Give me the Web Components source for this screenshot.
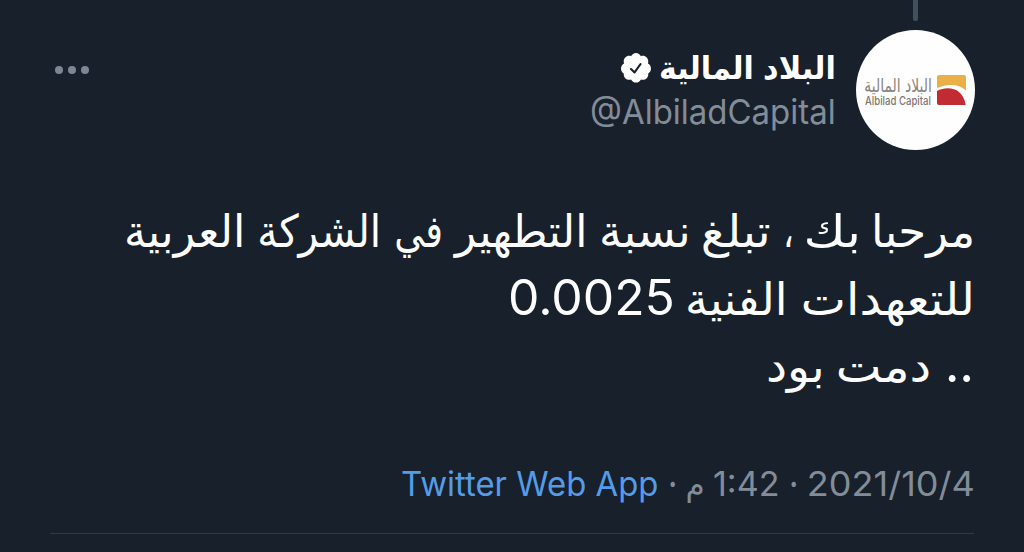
<!DOCTYPE html>
<html lang="ar">
<head>
<meta charset="utf-8">
<title>البلاد المالية</title>
<style>
html,body{margin:0;height:100%;background:#18202b;overflow:hidden}
</style>
</head>
<body>
<tweet-detail></tweet-detail>
<script>
const define = (name, html, setup) => {
  const t = document.createElement('template');
  t.innerHTML = html;
  customElements.define(name, class extends HTMLElement {
    connectedCallback() {
      if (this.shadowRoot) return;
      this.attachShadow({ mode: 'open' }).append(t.content.cloneNode(true));
      if (setup) setup(this);
    }
  });
};

// One word whose visible ink fills exactly `w` pixels; `gap` is the space before it.
define('fit-word', `
<style>:host{display:block;direction:ltr;flex:none;white-space:nowrap}
span{display:inline-block;transform-origin:0 50%}</style>
<span></span>`, el => {
  const span = el.shadowRoot.querySelector('span');
  const text = el.getAttribute('text');
  span.textContent = text;
  const w = +el.getAttribute('w');
  el.style.width = w + 'px';
  el.style.marginRight = (el.getAttribute('gap') || 0) + 'px';
  const cs = getComputedStyle(el);
  const c = document.createElement('canvas').getContext('2d');
  c.font = `${cs.fontWeight} ${cs.fontSize} ${cs.fontFamily}`;
  c.textAlign = 'left';
  const m = c.measureText(text);
  const s = w / (m.actualBoundingBoxLeft + m.actualBoundingBoxRight);
  span.style.transform = `translateX(${m.actualBoundingBoxLeft * s}px) scaleX(${s})`;
});

define('text-row', `
<style>:host{display:flex;direction:rtl;align-items:baseline;box-sizing:border-box}</style><slot></slot>`);

define('verified-badge', `
<style>:host{display:block;width:30px;height:31px;flex:none}svg{display:block}</style>
<svg width="30" height="31" viewBox="1.5 1.5 21 22" preserveAspectRatio="none">
<path fill="#fff" d="M22.5 12.5c0-1.58-.875-2.95-2.148-3.6.154-.435.238-.905.238-1.4 0-2.21-1.71-3.998-3.818-3.998-.47 0-.92.084-1.336.25C14.818 2.415 13.51 1.5 12 1.5s-2.816.917-3.437 2.25c-.415-.165-.866-.25-1.336-.25-2.11 0-3.818 1.79-3.818 4 0 .494.083.964.237 1.4-1.272.65-2.147 2.018-2.147 3.6 0 1.495.782 2.798 1.942 3.486-.02.17-.032.34-.032.514 0 2.21 1.708 4 3.818 4 .47 0 .92-.086 1.335-.25.62 1.334 1.926 2.25 3.437 2.25 1.512 0 2.818-.916 3.437-2.25.415.163.865.248 1.336.248 2.11 0 3.818-1.79 3.818-4 0-.174-.012-.344-.033-.513 1.158-.687 1.943-1.99 1.943-3.484z"/>
<path d="M8.5 12.9l2.5 2.4 4.2-6" fill="none" stroke="#18202b" stroke-width="1.5" stroke-linecap="round" stroke-linejoin="round"/>
</svg>`);

define('more-button', `
<style>:host{display:flex;gap:5px;padding:36px 0 0 5px}i{width:8px;height:8px;border-radius:50%;background:#7c8794}</style>
<i></i><i></i><i></i>`);

define('brand-avatar', `
<style>
:host{display:flex;box-sizing:border-box;width:119px;height:120px;border-radius:50%;background:#fefefe;align-items:flex-start;direction:ltr;padding:45px 0 0 9px;gap:6px;flex:none}
.names{width:66px}
.ar{height:20px;font:19px/20px "DejaVu Sans",sans-serif;color:#8b8480}
.en{height:12px;font:500 11.5px/12px Inter,sans-serif;color:#7d7672}
svg{display:block}
</style>
<div class="names">
<div class="ar"><fit-word text="البلاد المالية" w="66"></fit-word></div>
<div class="en"><fit-word text="Albilad Capital" w="66"></fit-word></div>
</div>
<svg width="29" height="30" viewBox="0 0 29 30">
<path fill="#eab048" d="M2 0H27Q29 0 29 2V15.5C23 9.5 12 8 0 13V2Q0 0 2 0Z"/>
<path fill="#c22b31" d="M0 16C7 12 17 12.500 22 17C26 20.500 28 25 28.700 30H2Q0 30 0 28Z"/>
</svg>`);

define('tweet-header', `
<style>
:host{display:flex;justify-content:space-between;height:120px;margin-right:-1px}
.user{display:flex;gap:22.5px;direction:rtl}
.name{display:flex;height:31px;margin-top:23px;gap:10px;color:#fff;font:bold 32px/31px "DejaVu Sans",sans-serif}
.handle{height:40px;margin-top:8px;color:#828d99;font:34px/40px Inter,sans-serif}
</style>
<more-button></more-button>
<div class="user">
<brand-avatar></brand-avatar>
<div>
<div class="name"><text-row><fit-word text="البلاد" w="70"></fit-word><fit-word text="المالية" w="91" gap="12"></fit-word></text-row><verified-badge></verified-badge></div>
<text-row class="handle"><fit-word text="@AlbiladCapital" w="241.5"></fit-word></text-row>
</div>
</div>`);

define('tweet-body', `
<style>
:host{display:block;padding-right:2px;color:#fdfdfe;font:45px/67px "DejaVu Sans",sans-serif}
text-row{height:67px}
.first{margin-top:-1px;margin-bottom:1px}
.num{font-family:Inter,sans-serif;font-size:49px;line-height:40px;font-weight:400}
.dots{font-weight:500}
</style>
<text-row class="first"><fit-word text="مرحبا" w="97"></fit-word><fit-word text="بك" w="50" gap="18"></fit-word><fit-word text="،" w="6" gap="15"></fit-word><fit-word text="تبلغ" w="66" gap="17"></fit-word><fit-word text="نسبة" w="85" gap="16"></fit-word><fit-word text="التطهير" w="131" gap="18"></fit-word><fit-word text="في" w="45" gap="12"></fit-word><fit-word text="الشركة" w="118" gap="18"></fit-word><fit-word text="العربية" w="115" gap="18"></fit-word></text-row>
<text-row><fit-word text="للتعهدات" w="168" gap="1"></fit-word><fit-word text="الفنية" w="96" gap="19"></fit-word><fit-word class="num" text="0.0025" w="162" gap="16"></fit-word></text-row>
<text-row><fit-word class="num dots" text=".." w="22" gap="2"></fit-word><fit-word text="دمت" w="91" gap="19"></fit-word><fit-word text="بود" w="53" gap="17"></fit-word></text-row>`);

define('tweet-meta', `
<style>
:host{display:block;padding-right:1.5px;color:#828d99;font:33.500px/48px Inter,sans-serif}
text-row{height:48px}
.link{color:#559ce8}
.dot{font-weight:600}
.ar{font-family:"DejaVu Sans",sans-serif;font-size:31px}
</style>
<text-row><fit-word text="2021/10/4" w="164"></fit-word><fit-word class="dot" text="·" w="5" gap="13"></fit-word><fit-word text="1:42" w="64" gap="13"></fit-word><fit-word class="ar" text="م" w="15" gap="11"></fit-word><fit-word class="dot" text="·" w="5" gap="13"></fit-word><fit-word class="link" text="Twitter Web App" w="255" gap="13"></fit-word></text-row>`);

define('tweet-detail', `
<style>
:host{display:flex;flex-direction:column;box-sizing:border-box;width:1024px;height:552px;padding:0 50px;background:#18202b;overflow:hidden}
.thread{align-self:flex-end;width:5px;height:21px;margin-right:56px;margin-bottom:9px;border-radius:0 0 2px 2px;background:#41505f}
tweet-body{margin-top:49px}
tweet-meta{margin-top:60px}
.rule{height:1px;margin-top:25px;background:#323a45}
</style>
<div class="thread"></div>
<tweet-header></tweet-header>
<tweet-body></tweet-body>
<tweet-meta></tweet-meta>
<div class="rule"></div>`);
</script>
</body>
</html>
